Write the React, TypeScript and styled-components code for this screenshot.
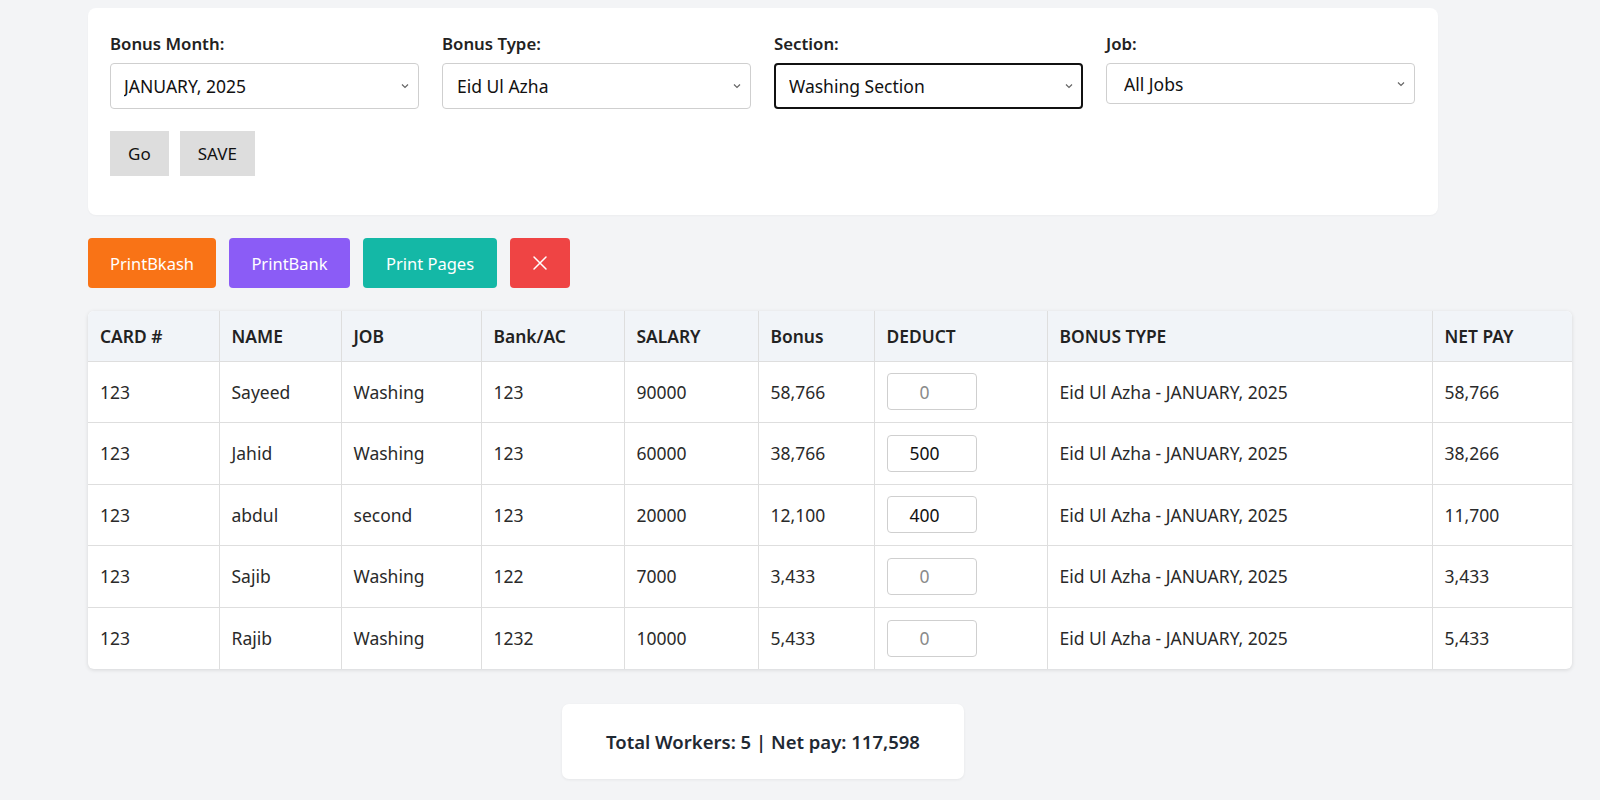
import React from "react";
import styled, { createGlobalStyle } from "styled-components";

const GlobalStyle = createGlobalStyle`
  html, body { margin: 0; padding: 0; }
  body {
    background: #f3f4f6;
    font-family: "Noto Sans", "Open Sans", sans-serif;
    font-size: 16px;
    color: #222;
  }
  * { box-sizing: border-box; }
`;

const Page = styled.div`
  padding: 8px 0 20px 88px;
  display: flex;
  flex-direction: column;
  align-items: flex-start;
`;

const FilterCard = styled.section`
  width: 1350px;
  background: #fff;
  border-radius: 8px;
  padding: 24px 23px 39px 22px;
  box-shadow: 0 1px 2px rgba(0, 0, 0, 0.03);
`;

const FilterGrid = styled.div`
  display: grid;
  grid-template-columns: repeat(4, 309px);
  column-gap: 23px;
  align-items: start;
`;

const Field = styled.div`
  display: flex;
  flex-direction: column;
`;

const Label = styled.label`
  font-weight: 600;
  font-size: 16.8px;
  line-height: 24px;
  margin-bottom: 7px;
  color: #222;
`;

const SelectWrap = styled.div`
  position: relative;
`;

const Select = styled.select<{ $h: number; $focused?: boolean; $pl?: number }>`
  appearance: none;
  -webkit-appearance: none;
  width: 100%;
  height: ${(p) => p.$h}px;
  padding: 0 28px 0 ${(p) => p.$pl ?? 13}px;
  font-family: inherit;
  font-size: 17.5px;
  color: #111;
  background: #fff;
  border: ${(p) => (p.$focused ? "2px solid #111" : "1px solid #cfcfcf")};
  border-radius: 4px;
  outline: none;
`;

const Chevron = styled.svg`
  position: absolute;
  right: 9px;
  top: 50%;
  width: 10px;
  height: 10px;
  margin-top: -5px;
  pointer-events: none;
`;

const ActionRow = styled.div`
  display: flex;
  gap: 11px;
  margin-top: 22px;
`;

const GrayButton = styled.button`
  height: 45px;
  padding: 0 18px;
  background: #dddddd;
  border: none;
  border-radius: 0;
  font-family: inherit;
  font-size: 17px;
  color: #111;
`;

const PrintRow = styled.div`
  display: flex;
  gap: 13px;
  margin-top: 23px;
`;

const ColorButton = styled.button<{ $bg: string; $w: number }>`
  width: ${(p) => p.$w}px;
  height: 50px;
  background: ${(p) => p.$bg};
  border: none;
  border-radius: 4px;
  color: #fff;
  font-family: inherit;
  font-size: 16.5px;
  display: flex;
  align-items: center;
  justify-content: center;
`;

const TableCard = styled.div`
  margin-top: 23px;
  width: 1484px;
  background: #fff;
  border-radius: 6px;
  overflow: hidden;
  box-shadow: 0 1px 4px rgba(0, 0, 0, 0.12);
`;

const Table = styled.table`
  width: 100%;
  border-collapse: collapse;
  table-layout: fixed;
`;

const Th = styled.th`
  background: #f1f4f8;
  text-align: left;
  font-weight: 600;
  font-size: 17.4px;
  color: #222;
  height: 50px;
  padding: 0 12px;
  border-right: 1px solid #dedede;
  border-bottom: 1px solid #dedede;
  &:last-child { border-right: none; }
`;

const Td = styled.td`
  height: 61.5px;
  padding: 0 12px;
  font-size: 17.5px;
  color: #2a2a2a;
  border-right: 1px solid #dedede;
  border-bottom: 1px solid #dedede;
  &:last-child { border-right: none; }
  tr:last-child > & { border-bottom: none; }
`;

const DeductInput = styled.input`
  width: 90px;
  height: 37px;
  padding: 0 14px 0 0;
  border: 1px solid #cfcfcf;
  border-radius: 4px;
  text-align: center;
  font-family: inherit;
  font-size: 17.5px;
  color: #111;
  outline: none;
  &::placeholder { color: #8a8a8a; }
`;

const TotalWrap = styled.div`
  width: 1350px;
  display: flex;
  justify-content: center;
  margin-top: 35px;
`;

const TotalBox = styled.div`
  width: 402px;
  height: 75px;
  background: #fff;
  border-radius: 7px;
  box-shadow: 0 1px 3px rgba(0, 0, 0, 0.06);
  display: flex;
  align-items: center;
  justify-content: center;
  font-weight: 600;
  font-size: 18.5px;
  color: #1f2933;
`;

const cols = [131, 122, 140, 143, 134, 116, 173, 385, 140];
const headers = ["CARD #", "NAME", "JOB", "Bank/AC", "SALARY", "Bonus", "DEDUCT", "BONUS TYPE", "NET PAY"];

const rows = [
  { card: "123", name: "Sayeed", job: "Washing", bank: "123", salary: "90000", bonus: "58,766", deduct: "", net: "58,766" },
  { card: "123", name: "Jahid", job: "Washing", bank: "123", salary: "60000", bonus: "38,766", deduct: "500", net: "38,266" },
  { card: "123", name: "abdul", job: "second", bank: "123", salary: "20000", bonus: "12,100", deduct: "400", net: "11,700" },
  { card: "123", name: "Sajib", job: "Washing", bank: "122", salary: "7000", bonus: "3,433", deduct: "", net: "3,433" },
  { card: "123", name: "Rajib", job: "Washing", bank: "1232", salary: "10000", bonus: "5,433", deduct: "", net: "5,433" },
];

const ChevronIcon = () => (
  <Chevron viewBox="0 0 10 10">
    <path d="M2 3.5 L5 6.5 L8 3.5" fill="none" stroke="#666" strokeWidth="1.2" />
  </Chevron>
);

const filters = [
  { label: "Bonus Month:", value: "JANUARY, 2025", h: 46, pl: 13 },
  { label: "Bonus Type:", value: "Eid Ul Azha", h: 46, pl: 14 },
  { label: "Section:", value: "Washing Section", h: 46, pl: 13, focused: true },
  { label: "Job:", value: "All Jobs", h: 41, pl: 17 },
];

export default function App() {
  return (
    <>
      <GlobalStyle />
      <Page>
        <FilterCard>
          <FilterGrid>
            {filters.map((f) => (
              <Field key={f.label}>
                <Label>{f.label}</Label>
                <SelectWrap>
                  <Select $h={f.h} $pl={f.pl} $focused={f.focused} defaultValue={f.value}>
                    <option>{f.value}</option>
                  </Select>
                  <ChevronIcon />
                </SelectWrap>
              </Field>
            ))}
          </FilterGrid>
          <ActionRow>
            <GrayButton>Go</GrayButton>
            <GrayButton>SAVE</GrayButton>
          </ActionRow>
        </FilterCard>

        <PrintRow>
          <ColorButton $bg="#f97316" $w={128}>PrintBkash</ColorButton>
          <ColorButton $bg="#8b5cf6" $w={121}>PrintBank</ColorButton>
          <ColorButton $bg="#14b8a6" $w={134}>Print Pages</ColorButton>
          <ColorButton $bg="#ef4444" $w={60} aria-label="close">
            <svg width="16" height="16" viewBox="0 0 16 16">
              <path d="M2 2 L14 14 M14 2 L2 14" stroke="#fff" strokeWidth="1.5" strokeLinecap="round" />
            </svg>
          </ColorButton>
        </PrintRow>

        <TableCard>
          <Table>
            <colgroup>
              {cols.map((w, i) => (
                <col key={i} style={{ width: w }} />
              ))}
            </colgroup>
            <thead>
              <tr>
                {headers.map((h) => (
                  <Th key={h}>{h}</Th>
                ))}
              </tr>
            </thead>
            <tbody>
              {rows.map((r) => (
                <tr key={r.name}>
                  <Td>{r.card}</Td>
                  <Td>{r.name}</Td>
                  <Td>{r.job}</Td>
                  <Td>{r.bank}</Td>
                  <Td>{r.salary}</Td>
                  <Td>{r.bonus}</Td>
                  <Td>
                    <DeductInput placeholder="0" defaultValue={r.deduct} />
                  </Td>
                  <Td>Eid Ul Azha - JANUARY, 2025</Td>
                  <Td>{r.net}</Td>
                </tr>
              ))}
            </tbody>
          </Table>
        </TableCard>

        <TotalWrap>
          <TotalBox>Total Workers: 5 | Net pay: 117,598</TotalBox>
        </TotalWrap>
      </Page>
    </>
  );
}
